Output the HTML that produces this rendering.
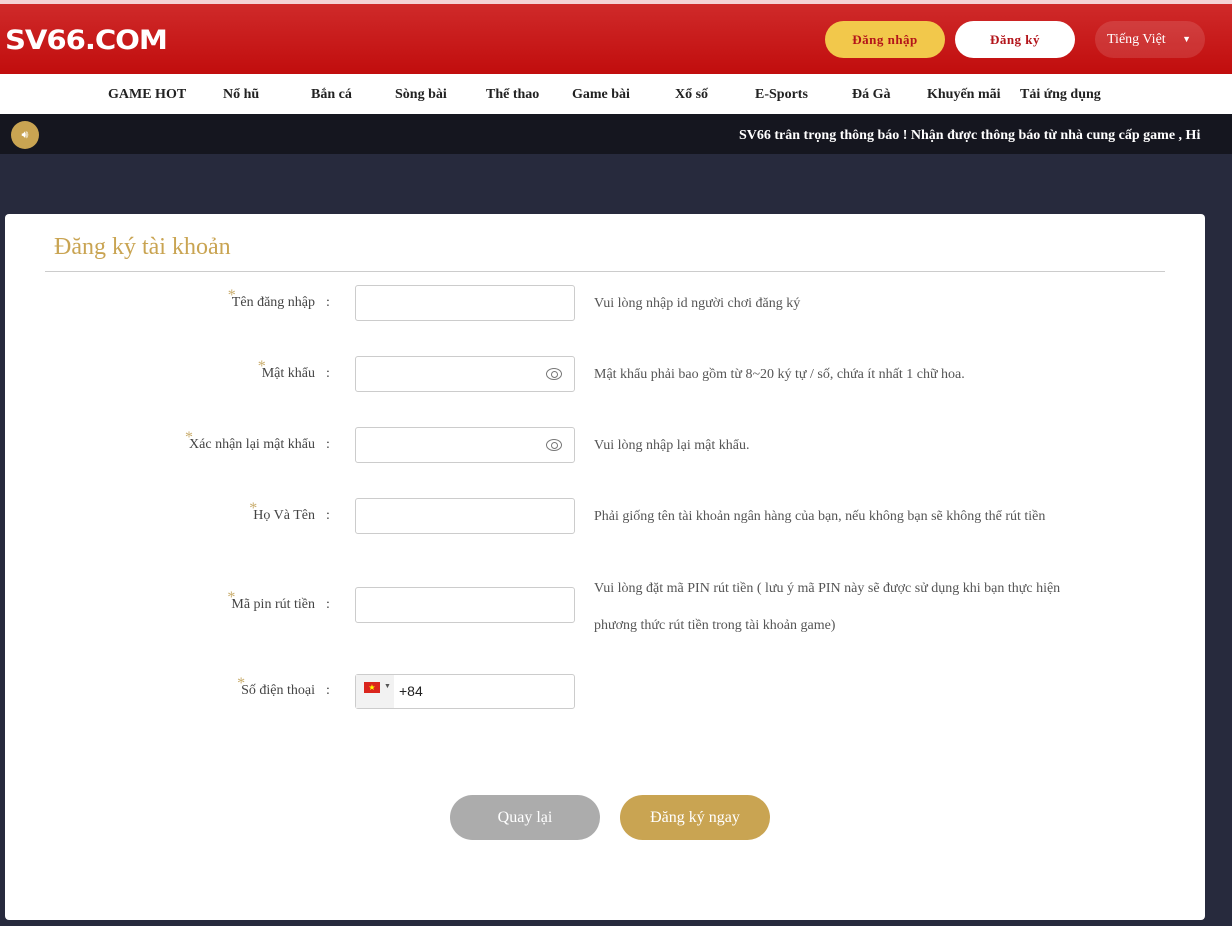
<!DOCTYPE html>
<html><head><meta charset="utf-8"><style>
*{margin:0;padding:0;box-sizing:border-box}
body{width:1232px;height:926px;overflow:hidden;background:#272a3d;font-family:"Liberation Serif",serif;position:relative}
.top{position:absolute;left:0;top:0;width:1232px;height:4px;background:#f4d3d6}
.hdr{position:absolute;left:0;top:4px;width:1232px;height:70px;background:linear-gradient(#cf2a2a,#c10d0d)}
.logo{position:absolute;left:5px;top:21px;color:#fff;font-family:"DejaVu Sans",sans-serif;font-weight:bold;font-size:27px;letter-spacing:-1px;transform:scaleX(1.08);transform-origin:left}
.btn{position:absolute;top:17px;height:37px;border-radius:19px;font-weight:bold;font-size:13px;letter-spacing:.5px;color:#b3141a;text-align:center;line-height:37px}
.nav{position:absolute;left:0;top:74px;width:1232px;height:40px;background:#fff}
.nav span{position:absolute;top:13px;font-weight:bold;font-size:14px;color:#222}
.tick{position:absolute;left:0;top:114px;width:1232px;height:40px;background:#15161f;overflow:hidden}
.card{position:absolute;left:5px;top:214px;width:1200px;height:706px;background:#fff;border-radius:4px}
.lbl{position:absolute;right:890px;font-size:14px;color:#444;white-space:nowrap}
.lbl i{color:#c9ad6e;font-style:normal;font-size:16px;position:absolute;left:-4px;top:-8px}
.col{position:absolute;left:321px;font-size:14px;color:#444}
.in{position:absolute;left:350px;width:220px;height:36px;border:1px solid #ccc;border-radius:3px}
.hint{position:absolute;left:589px;font-size:14px;color:#555;white-space:nowrap}
.eye{position:absolute;right:12px;top:11px;width:16px;height:12px;border:1.5px solid #777;border-radius:50%}
.eye:after{content:"";position:absolute;left:4px;top:2px;width:5px;height:5px;border:1.3px solid #777;border-radius:50%}
</style></head><body>
<div class="top"></div>
<div class="hdr">
<div class="logo">SV66.COM</div>
<div class="btn" style="left:825px;width:120px;background:#f2c84b">Đăng nhập</div>
<div class="btn" style="left:955px;width:120px;background:#fff">Đăng ký</div>
<div class="btn" style="left:1095px;width:110px;background:rgba(255,255,255,.12);color:#fff;font-weight:normal;text-align:left;padding-left:12px;font-size:14px;letter-spacing:0">Tiếng Việt <span style="position:absolute;right:14px;font-size:9px">▼</span></div>
</div>
<div class="nav">
<span style="left:108px">GAME HOT</span><span style="left:223px">Nổ hũ</span><span style="left:311px">Bắn cá</span><span style="left:395px">Sòng bài</span><span style="left:486px">Thể thao</span><span style="left:572px">Game bài</span><span style="left:675px">Xổ số</span><span style="left:755px">E-Sports</span><span style="left:852px">Đá Gà</span><span style="left:927px">Khuyến mãi</span><span style="left:1020px">Tải ứng dụng</span>
</div>
<div class="tick">
<div style="position:absolute;left:11px;top:7px;width:28px;height:28px;border-radius:50%;background:#c9a452;color:#fff;font-size:11px;text-align:center;line-height:28px;font-family:'DejaVu Sans'">🔊︎</div>
<div style="position:absolute;left:739px;top:14px;color:#fff;font-weight:bold;font-size:14px;white-space:nowrap">SV66 trân trọng thông báo ! Nhận được thông báo từ nhà cung cấp game , Hi</div>
<div style="position:absolute;left:1206px;top:0;width:26px;height:40px;background:#15161f"></div>
</div>
<div class="card">
<div style="position:absolute;left:49px;top:20px;font-size:24px;color:#c9a452">Đăng ký tài khoản</div>
<div style="position:absolute;left:40px;top:57px;width:1120px;height:1px;background:#ccc"></div>

<div class="lbl" style="top:81px"><i>*</i>Tên đăng nhập</div><div class="col" style="top:81px">:</div>
<div class="in" style="top:71px"></div><div class="hint" style="top:82px">Vui lòng nhập id người chơi đăng ký</div>

<div class="lbl" style="top:152px"><i>*</i>Mật khẩu</div><div class="col" style="top:152px">:</div>
<div class="in" style="top:142px"><div class="eye"></div></div><div class="hint" style="top:153px">Mật khẩu phải bao gồm từ 8~20 ký tự / số, chứa ít nhất 1 chữ hoa.</div>

<div class="lbl" style="top:223px"><i>*</i>Xác nhận lại mật khẩu</div><div class="col" style="top:223px">:</div>
<div class="in" style="top:213px"><div class="eye"></div></div><div class="hint" style="top:224px">Vui lòng nhập lại mật khẩu.</div>

<div class="lbl" style="top:294px"><i>*</i>Họ Và Tên</div><div class="col" style="top:294px">:</div>
<div class="in" style="top:284px"></div><div class="hint" style="top:295px">Phải giống tên tài khoản ngân hàng của bạn, nếu không bạn sẽ không thể rút tiền</div>

<div class="lbl" style="top:383px"><i>*</i>Mã pin rút tiền</div><div class="col" style="top:383px">:</div>
<div class="in" style="top:373px"></div><div class="hint" style="top:356px;line-height:37px">Vui lòng đặt mã PIN rút tiền ( lưu ý mã PIN này sẽ được sử dụng khi bạn thực hiện<br>phương thức rút tiền trong tài khoản game)</div>

<div class="lbl" style="top:469px"><i>*</i>Số điện thoại</div><div class="col" style="top:469px">:</div>
<div class="in" style="top:460px;height:35px"><div style="position:absolute;left:0;top:0;width:38px;height:33px;background:#f2f2f2"></div><div style="position:absolute;left:8px;top:7px;width:16px;height:11px;background:#da251d;color:#ff0;font-size:8px;line-height:11px;text-align:center">★</div><div style="position:absolute;left:28px;top:7px;font-size:7px;color:#555">▼</div><div style="position:absolute;left:43px;top:8px;font-family:'Liberation Sans',sans-serif;font-size:14px;color:#222">+84</div></div>

<div style="position:absolute;left:445px;top:581px;width:150px;height:45px;border-radius:23px;background:#acacac;color:#fff;font-size:16px;text-align:center;line-height:45px">Quay lại</div>
<div style="position:absolute;left:615px;top:581px;width:150px;height:45px;border-radius:23px;background:#c9a452;color:#fff;font-size:16px;text-align:center;line-height:45px">Đăng ký ngay</div>
</div>
</body></html>
